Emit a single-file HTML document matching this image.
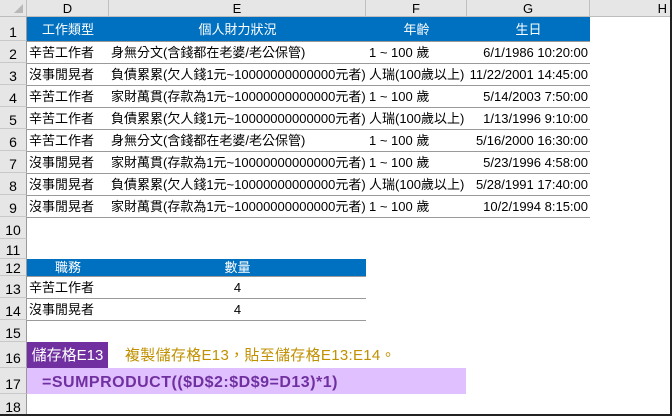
<!DOCTYPE html>
<html><head><meta charset="utf-8"><style>
*{margin:0;padding:0;box-sizing:border-box}
body{width:672px;height:416px;overflow:hidden;background:#fff;position:relative;font-family:"Liberation Sans","Noto Sans CJK TC",sans-serif;font-size:13px;color:#000}
div{position:absolute;white-space:nowrap}
.ch{top:0;height:17px;background:#e6e6e6;border-right:1px solid #c0c0c0;border-bottom:1px solid #bdbdbd;text-align:center;line-height:17px;font-size:13px}
.rh{left:0;width:27px;background:#e6e6e6;border-right:1px solid #9a9a9a;border-bottom:1px solid #c8c8c8;text-align:center;font-size:14px;padding-top:5px}
.hl{height:1px;background:#9a9a9a}
.t{line-height:23px;font-size:13px}
.blue{background:#0070c0;color:#fff}
</style></head><body>
<div class="ch" style="left:0;width:27px"><span style="position:absolute;right:3px;bottom:3px;width:0;height:0;border-left:9px solid transparent;border-bottom:9px solid #b8b8b8"></span></div>
<div class="ch" style="left:27px;width:82px">D</div>
<div class="ch" style="left:109px;width:257px">E</div>
<div class="ch" style="left:366px;width:101px">F</div>
<div class="ch" style="left:467px;width:123px">G</div>
<div class="ch" style="left:590px;width:82px;text-align:right;padding-right:4px">H</div>

<div class="rh" style="top:17px;height:24px;padding-top:7px">1</div>
<div class="rh" style="top:41px;height:22px">2</div>
<div class="rh" style="top:63px;height:22px">3</div>
<div class="rh" style="top:85px;height:22px">4</div>
<div class="rh" style="top:107px;height:22px">5</div>
<div class="rh" style="top:129px;height:22px">6</div>
<div class="rh" style="top:151px;height:22px">7</div>
<div class="rh" style="top:173px;height:22px">8</div>
<div class="rh" style="top:195px;height:22px">9</div>
<div class="rh" style="top:217px;height:22px">10</div>
<div class="rh" style="top:239px;height:20px;padding-top:3px">11</div>
<div class="rh" style="top:259px;height:17px;padding-top:1px">12</div>
<div class="rh" style="top:276px;height:22px">13</div>
<div class="rh" style="top:298px;height:22px">14</div>
<div class="rh" style="top:320px;height:22px">15</div>
<div class="rh" style="top:342px;height:26px;padding-top:8px">16</div>
<div class="rh" style="top:368px;height:26px;padding-top:8px">17</div>
<div class="rh" style="top:394px;height:22px">18</div>

<div class="blue" style="left:27px;top:17px;width:563px;height:24px"></div>
<div style="left:27px;top:17px;width:82px;color:#fff;text-align:center;line-height:25px">工作類型</div>
<div style="left:109px;top:17px;width:257px;color:#fff;text-align:center;line-height:25px">個人財力狀況</div>
<div style="left:366px;top:17px;width:101px;color:#fff;text-align:center;line-height:25px">年齡</div>
<div style="left:467px;top:17px;width:123px;color:#fff;text-align:center;line-height:25px">生日</div>

<div class="hl" style="left:27px;top:41px;width:563px"></div>
<div class="hl" style="left:27px;top:63px;width:563px"></div>
<div class="hl" style="left:27px;top:85px;width:563px"></div>
<div class="hl" style="left:27px;top:107px;width:563px"></div>
<div class="hl" style="left:27px;top:129px;width:563px"></div>
<div class="hl" style="left:27px;top:151px;width:563px"></div>
<div class="hl" style="left:27px;top:173px;width:563px"></div>
<div class="hl" style="left:27px;top:195px;width:563px"></div>
<div class="hl" style="left:27px;top:217px;width:563px"></div>

<div class="t" style="left:29px;top:41px">辛苦工作者</div><div class="t" style="left:111px;top:41px">身無分文(含錢都在老婆/老公保管)</div><div class="t" style="left:369px;top:41px">1 ~ 100 歲</div><div class="t" style="left:467px;top:41px;width:121px;text-align:right">6/1/1986 10:20:00</div>
<div class="t" style="left:29px;top:63px">沒事閒晃者</div><div class="t" style="left:111px;top:63px">負債累累(欠人錢1元~10000000000000元者)</div><div class="t" style="left:369px;top:63px">人瑞(100歲以上)</div><div class="t" style="left:467px;top:63px;width:121px;text-align:right">11/22/2001 14:45:00</div>
<div class="t" style="left:29px;top:85px">辛苦工作者</div><div class="t" style="left:111px;top:85px">家財萬貫(存款為1元~10000000000000元者)</div><div class="t" style="left:369px;top:85px">1 ~ 100 歲</div><div class="t" style="left:467px;top:85px;width:121px;text-align:right">5/14/2003 7:50:00</div>
<div class="t" style="left:29px;top:107px">辛苦工作者</div><div class="t" style="left:111px;top:107px">負債累累(欠人錢1元~10000000000000元者)</div><div class="t" style="left:369px;top:107px">人瑞(100歲以上)</div><div class="t" style="left:467px;top:107px;width:121px;text-align:right">1/13/1996 9:10:00</div>
<div class="t" style="left:29px;top:129px">辛苦工作者</div><div class="t" style="left:111px;top:129px">身無分文(含錢都在老婆/老公保管)</div><div class="t" style="left:369px;top:129px">1 ~ 100 歲</div><div class="t" style="left:467px;top:129px;width:121px;text-align:right">5/16/2000 16:30:00</div>
<div class="t" style="left:29px;top:151px">沒事閒晃者</div><div class="t" style="left:111px;top:151px">家財萬貫(存款為1元~10000000000000元者)</div><div class="t" style="left:369px;top:151px">1 ~ 100 歲</div><div class="t" style="left:467px;top:151px;width:121px;text-align:right">5/23/1996 4:58:00</div>
<div class="t" style="left:29px;top:173px">沒事閒晃者</div><div class="t" style="left:111px;top:173px">負債累累(欠人錢1元~10000000000000元者)</div><div class="t" style="left:369px;top:173px">人瑞(100歲以上)</div><div class="t" style="left:467px;top:173px;width:121px;text-align:right">5/28/1991 17:40:00</div>
<div class="t" style="left:29px;top:195px">沒事閒晃者</div><div class="t" style="left:111px;top:195px">家財萬貫(存款為1元~10000000000000元者)</div><div class="t" style="left:369px;top:195px">1 ~ 100 歲</div><div class="t" style="left:467px;top:195px;width:121px;text-align:right">10/2/1994 8:15:00</div>

<div class="blue" style="left:27px;top:259px;width:339px;height:17px"></div>
<div style="left:27px;top:259px;width:82px;color:#fff;text-align:center;line-height:18px">職務</div>
<div style="left:109px;top:259px;width:257px;color:#fff;text-align:center;line-height:18px">數量</div>
<div class="hl" style="left:27px;top:276px;width:339px"></div>
<div class="hl" style="left:27px;top:298px;width:339px"></div>
<div class="hl" style="left:27px;top:320px;width:339px"></div>
<div class="t" style="left:29px;top:276px">辛苦工作者</div><div class="t" style="left:109px;top:276px;width:257px;text-align:center">4</div>
<div class="t" style="left:29px;top:298px">沒事閒晃者</div><div class="t" style="left:109px;top:298px;width:257px;text-align:center">4</div>

<div style="left:27px;top:342px;width:81px;height:26px;background:#7030a0;color:#fff;font-size:15px;line-height:28px;text-align:center">儲存格E13</div>
<div style="left:125px;top:342px;line-height:28px;color:#c09000;font-size:15px;letter-spacing:0.3px">複製儲存格E13，貼至儲存格E13:E14。</div>
<div style="left:27px;top:368px;width:439px;height:26px;background:#e0c0ff;color:#7030a0;font-weight:bold;font-size:16px;line-height:29px;padding-left:15px;letter-spacing:0.5px">=SUMPRODUCT(($D$2:$D$9=D13)*1)</div>

<div style="left:670px;top:0;width:2px;height:416px;background:#222"></div>
<div style="left:0;top:414px;width:672px;height:2px;background:#222"></div>
</body></html>
